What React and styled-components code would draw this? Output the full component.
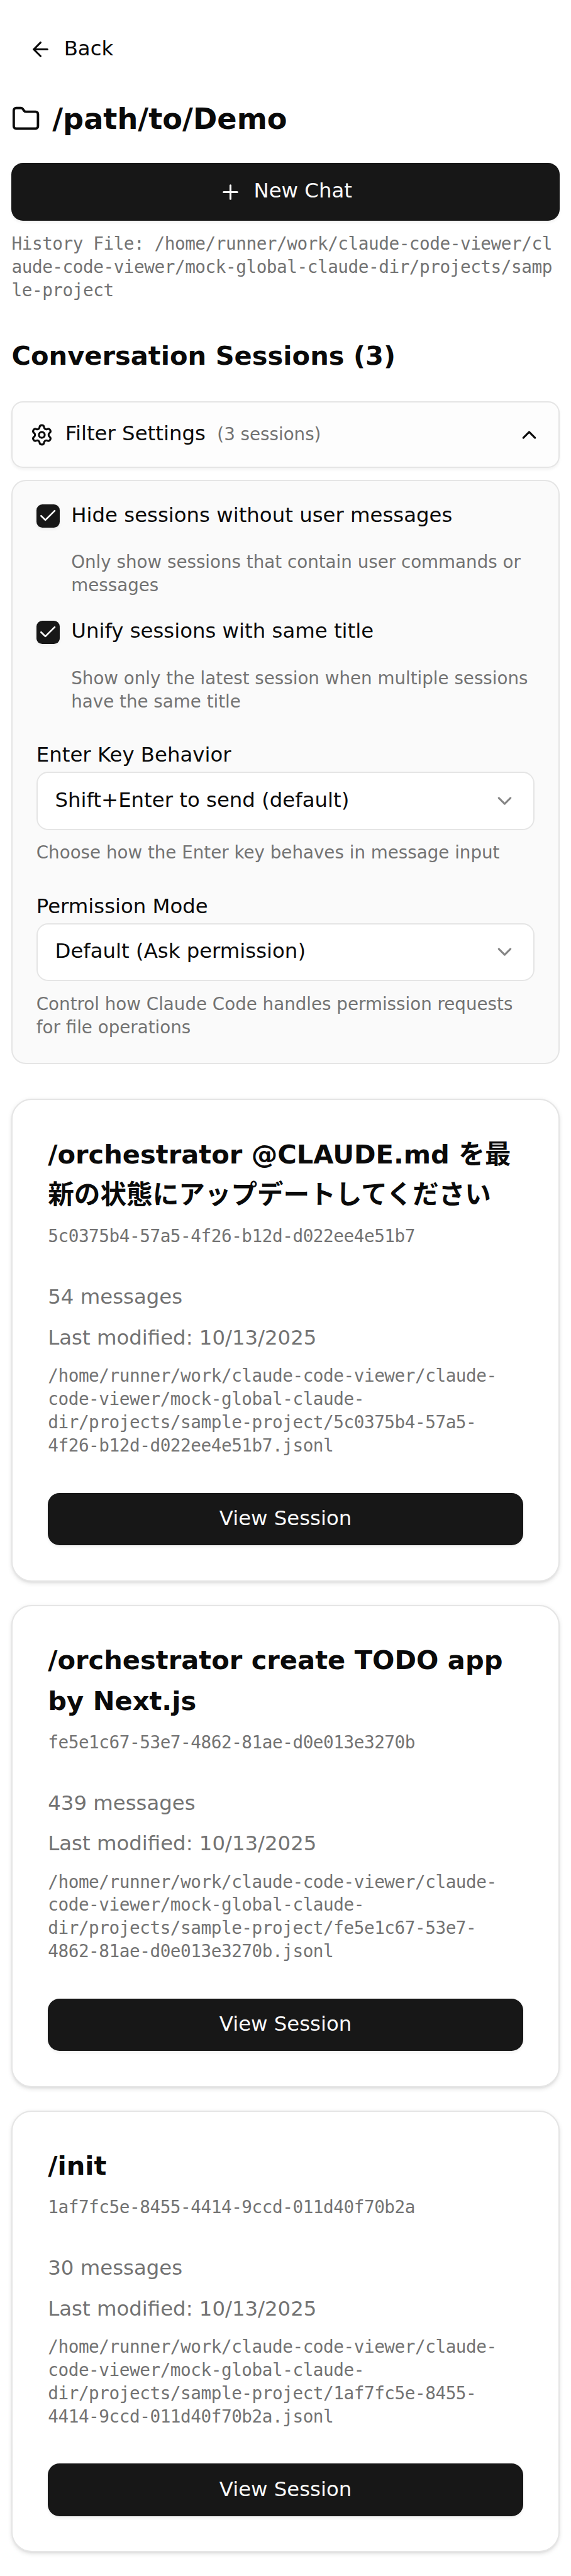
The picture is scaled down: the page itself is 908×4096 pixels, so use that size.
import React from "react";
import styled, { createGlobalStyle } from "styled-components";
import { ArrowLeft, Folder, Plus, Settings, ChevronUp, ChevronDown, Check } from "lucide-react";

const Global = createGlobalStyle`
  *, *::before, *::after { box-sizing: border-box; margin: 0; padding: 0; }
  html { font-size: 36.984px; background: #fff; }
  body { font-family: "DejaVu Sans", "Noto Sans CJK JP", sans-serif; color: #0a0a0a; line-height: 1.5; }
  button { font: inherit; border: 0; background: none; color: inherit; }
  svg { flex-shrink: 0; display: block; }
`;

const line = "0.0625rem solid #e5e5e5";
const mono = `"DejaVu Sans Mono", monospace`;

const Page = styled.div`
  padding: 1rem 0.5rem;
`;

const Icon = styled.span`
  display: inline-flex;
  flex-shrink: 0;
  color: ${(p) => p.$color || "inherit"};
  svg { width: ${(p) => p.$size || 1}rem; height: ${(p) => p.$size || 1}rem; }
`;

/* Label text sits slightly above the optical centre of its row. */
const Label = styled.span`
  display: block;
  margin: -0.04rem 0 0.04rem;
`;

const BackButton = styled.button`
  display: flex;
  align-items: center;
  gap: 0.5rem;
  height: 2.25rem;
  padding: 0 0.75rem;
  font-size: 0.875rem;
  line-height: 1.25rem;
`;

const TitleRow = styled.div`
  display: flex;
  align-items: center;
  gap: 0.5rem;
  margin-top: 1rem;
`;

const Title = styled.h1`
  font-size: 1.25rem;
  line-height: 1.75rem;
  font-weight: 700;
`;

const PrimaryButton = styled.button`
  display: flex;
  align-items: center;
  justify-content: center;
  gap: 0.5rem;
  width: 100%;
  height: ${(p) => p.$height}rem;
  margin-top: ${(p) => p.$top}rem;
  border-radius: 0.5rem;
  background: #171717;
  color: #fafafa;
  font-size: 0.875rem;
  line-height: 1.25rem;
  box-shadow: 0 0.0625rem 0.125rem rgba(0, 0, 0, 0.05);
`;

const MonoText = styled.p`
  font-family: ${mono};
  font-size: 0.75rem;
  line-height: 1rem;
  letter-spacing: -0.0128rem;
  color: #737373;
  margin-top: ${(p) => p.$top || 0}rem;
  word-break: ${(p) => (p.$breakAll ? "break-all" : "normal")};
`;

const SectionTitle = styled.h2`
  font-size: 1.125rem;
  line-height: 1.75rem;
  font-weight: 700;
  margin: 1.44rem 0 1.06rem;
`;

const FilterToggle = styled.button`
  display: flex;
  align-items: center;
  gap: 0.5rem;
  width: 100%;
  height: 2.875rem;
  padding: 0 0.75rem;
  border: ${line};
  border-radius: 0.5rem;
  background: #fdfdfd;
  font-size: 0.875rem;
  line-height: 1.25rem;
  box-shadow: 0 0.0625rem 0.125rem rgba(0, 0, 0, 0.05);
`;

const Count = styled.span`
  flex: 1;
  text-align: left;
  font-size: 0.75rem;
  color: #737373;
`;

const FilterPanel = styled.section`
  margin-top: 0.5rem;
  padding: 1.0084rem;
  border: ${line};
  border-radius: 0.625rem;
  background: #fafafa;
`;

const CheckRow = styled.div`
  display: flex;
  align-items: center;
  gap: 0.5rem;
  font-size: 0.875rem;
  line-height: 1rem;
  margin-top: ${(p) => p.$top || 0}rem;
`;

const Box = styled.span`
  display: flex;
  align-items: center;
  justify-content: center;
  width: 1rem;
  height: 1rem;
  border-radius: 0.25rem;
  background: #171717;
  color: #fafafa;
  box-shadow: 0 0.0625rem 0.125rem rgba(0, 0, 0, 0.05);
`;

const Hint = styled.p`
  font-size: 0.75rem;
  line-height: 1rem;
  color: #737373;
  margin-top: ${(p) => p.$top || 0.5}rem;
  padding-left: ${(p) => (p.$indent ? 1.5 : 0)}rem;
`;

const FieldLabel = styled.div`
  font-size: 0.875rem;
  line-height: 1.25rem;
  margin: 1.15rem 0 0.1rem;
`;

const SelectBox = styled.button`
  display: flex;
  align-items: center;
  justify-content: space-between;
  width: 100%;
  height: 2.5rem;
  padding: 0 0.75rem;
  border: ${line};
  border-radius: 0.5rem;
  background: #fff;
  font-size: 0.875rem;
  line-height: 1.25rem;
`;

const Sessions = styled.div`
  display: flex;
  flex-direction: column;
  gap: 1rem;
  margin-top: 1.5rem;
`;

const Card = styled.article`
  display: flex;
  flex-direction: column;
  padding: 1.5084rem;
  border: ${line};
  border-radius: 0.875rem;
  background: #fff;
  box-shadow: 0 0.0625rem 0.1875rem rgba(0, 0, 0, 0.1), 0 0.0625rem 0.125rem -0.0625rem rgba(0, 0, 0, 0.1);
`;

const CardTitle = styled.h3`
  font-size: 1.125rem;
  line-height: 1.75rem;
  font-weight: 700;
  word-break: break-word;
  margin: -0.04rem 0 0.04rem;
`;

const Meta = styled.p`
  font-size: 0.875rem;
  line-height: 1.25rem;
  color: #737373;
  margin: ${(p) => p.$top - 0.04}rem 0 0.04rem;
`;

const sessions = [
  { title: "/orchestrator @CLAUDE.md を最新の状態にアップデートしてください", id: "5c0375b4-57a5-4f26-b12d-d022ee4e51b7", count: 54 },
  { title: "/orchestrator create TODO app by Next.js", id: "fe5e1c67-53e7-4862-81ae-d0e013e3270b", count: 439 },
  { title: "/init", id: "1af7fc5e-8455-4414-9ccd-011d40f70b2a", count: 30 },
];

const root = "/home/runner/work/claude-code-viewer/claude-code-viewer/mock-global-claude-dir/projects/sample-project";

function Checked({ label, hint, top }) {
  return (
    <>
      <CheckRow $top={top}>
        <Box><Icon $size={0.875}><Check /></Icon></Box>
        <Label>{label}</Label>
      </CheckRow>
      <Hint $top={1} $indent>{hint}</Hint>
    </>
  );
}

function Field({ label, value, hint }) {
  return (
    <>
      <FieldLabel>{label}</FieldLabel>
      <SelectBox>
        <Label>{value}</Label>
        <Icon $color="#858585"><ChevronDown /></Icon>
      </SelectBox>
      <Hint>{hint}</Hint>
    </>
  );
}

function SessionCard({ title, id, count }) {
  return (
    <Card>
      <CardTitle>{title}</CardTitle>
      <MonoText $top={0.375}>{id}</MonoText>
      <Meta $top={1.5}>{`${count} messages`}</Meta>
      <Meta $top={0.5}>Last modified: 10/13/2025</Meta>
      <MonoText $top={0.5}>{`${root}/${id}.jsonl`}</MonoText>
      <PrimaryButton $height={2.25} $top={1.5}><Label>View Session</Label></PrimaryButton>
    </Card>
  );
}

export default function App() {
  return (
    <Page>
      <Global />
      <BackButton><Icon><ArrowLeft /></Icon><Label>Back</Label></BackButton>
      <TitleRow>
        <Icon $size={1.25}><Folder /></Icon>
        <Title>/path/to/Demo</Title>
      </TitleRow>
      <PrimaryButton $height={2.5} $top={1}><Icon><Plus /></Icon><Label>New Chat</Label></PrimaryButton>
      <MonoText $breakAll $top={0.5}>{`History File: ${root}`}</MonoText>
      <SectionTitle>Conversation Sessions (3)</SectionTitle>
      <FilterToggle>
        <Icon><Settings /></Icon>
        <Label>Filter Settings</Label>
        <Count>(3 sessions)</Count>
        <Icon><ChevronUp /></Icon>
      </FilterToggle>
      <FilterPanel>
        <Checked label="Hide sessions without user messages" hint="Only show sessions that contain user commands or messages" />
        <Checked top={1} label="Unify sessions with same title" hint="Show only the latest session when multiple sessions have the same title" />
        <Field label="Enter Key Behavior" value="Shift+Enter to send (default)" hint="Choose how the Enter key behaves in message input" />
        <Field label="Permission Mode" value="Default (Ask permission)" hint="Control how Claude Code handles permission requests for file operations" />
      </FilterPanel>
      <Sessions>
        {sessions.map((s) => <SessionCard key={s.id} {...s} />)}
      </Sessions>
    </Page>
  );
}
